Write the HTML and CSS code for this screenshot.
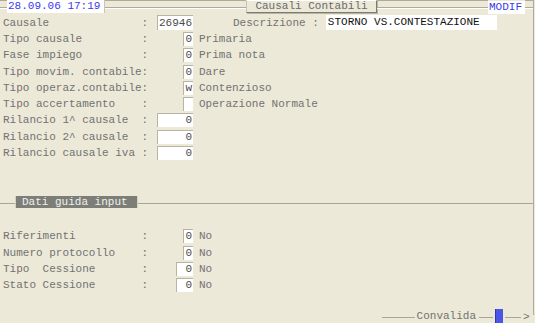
FILE: index.html
```html
<!DOCTYPE html>
<html>
<head>
<meta charset="utf-8">
<link rel="stylesheet" href="styles.css">
</head>
<body>
<div class="screen">
  <div class="topbar">
    <div class="line lead"></div>
    <div class="date">28.09.06 17:19</div>
    <div class="line l1"></div>
    <div class="title">Causali Contabili</div>
    <div class="line l2"></div>
    <div class="modif">MODIF</div>
    <div class="line tail"></div>
  </div>
  <div class="main">
    <div class="row first">
      <span class="lbl">Causale              :</span>
      <span class="fld"><span class="box c5">26946</span></span>
      <span class="desc-lbl">Descrizione :</span>
      <span class="box desc">STORNO VS.CONTESTAZIONE</span>
    </div>
    <div class="row"><span class="lbl">Tipo causale         :</span><span class="fld"><span class="box c1">0</span></span><span class="txt">Primaria</span></div>
    <div class="row"><span class="lbl">Fase impiego         :</span><span class="fld"><span class="box c1">0</span></span><span class="txt">Prima nota</span></div>
    <div class="row"><span class="lbl">Tipo movim. contabile:</span><span class="fld"><span class="box c1">0</span></span><span class="txt">Dare</span></div>
    <div class="row"><span class="lbl">Tipo operaz.contabile:</span><span class="fld"><span class="box c1">w</span></span><span class="txt">Contenzioso</span></div>
    <div class="row"><span class="lbl">Tipo accertamento    :</span><span class="fld"><span class="box c1"></span></span><span class="txt">Operazione Normale</span></div>
    <div class="row"><span class="lbl">Rilancio 1^ causale  :</span><span class="fld"><span class="box c5">0</span></span></div>
    <div class="row"><span class="lbl">Rilancio 2^ causale  :</span><span class="fld"><span class="box c5">0</span></span></div>
    <div class="row"><span class="lbl">Rilancio causale iva :</span><span class="fld"><span class="box c5">0</span></span></div>

    <div class="divider">
      <div class="dline short"></div>
      <div class="dtitle">Dati guida input</div>
      <div class="dline"></div>
    </div>

    <div class="row low first-low"><span class="lbl">Riferimenti          :</span><span class="fld"><span class="box c1">0</span></span><span class="txt">No</span></div>
    <div class="row low"><span class="lbl">Numero protocollo    :</span><span class="fld"><span class="box c1">0</span></span><span class="txt">No</span></div>
    <div class="row low"><span class="lbl">Tipo  Cessione       :</span><span class="fld"><span class="box c2">0</span></span><span class="txt">No</span></div>
    <div class="row low"><span class="lbl">Stato Cessione       :</span><span class="fld"><span class="box c2">0</span></span><span class="txt">No</span></div>
  </div>
  <div class="footer">
    <div class="fline f1"></div>
    <div class="ftext">Convalida</div>
    <div class="fline f2"></div>
    <div class="cursor"></div>
    <div class="fline f3"></div>
    <div class="arrow">&gt;</div>
    <div class="fend"></div>
  </div>
</div>
</body>
</html>
```

FILE: styles.css
```css
* { box-sizing: border-box; }
body {
  margin: 0;
  background: #ECE9D8;
  font-family: "Courier New", "Nimbus Mono PS", "FreeMono", "Liberation Mono", monospace;
  font-size: 11px;
  color: #727272;
}
.screen {
  width: 535px;
  height: 323px;
  overflow: hidden;
}
.topbar {
  display: flex;
  height: 14px;
}
.line {
  background: linear-gradient(to bottom,
    #aeab9b 0, #aeab9b 1px,
    transparent 1px, transparent 7px,
    #aeab9b 7px, #aeab9b 8px,
    #ffffff 8px, #ffffff 9px,
    transparent 9px);
}
.lead { width: 7px; }
.date {
  width: 98px;
  height: 13px;
  background: #fff;
  color: #3a3aee;
  line-height: 13px;
  padding-left: 1px;
  border-right: 1px solid #c9c6b6;
  white-space: pre;
}
.l1 { width: 141px; }
.title {
  width: 131px;
  height: 13px;
  line-height: 11px;
  text-align: center;
  border: 1px solid;
  border-color: #ffffff #7d7b6e #7d7b6e #c8c5b5;
  box-shadow: 1px 1px 0 #b8b5a5;
  color: #6a6a6a;
}
.l2 { flex: 1; }
.modif {
  width: 37px;
  height: 13px;
  margin-top: 1px;
  background: #fff;
  color: #3a3aee;
  line-height: 12px;
  padding-left: 1px;
}
.tail { width: 9px; border-right: 1px solid #aeab9b; margin-right: 1px; }

.main {
  width: 534px;
  height: 295px;
  border-right: 1px solid #aeab9b;
}
.row {
  display: flex;
  align-items: center;
  height: 16.25px;
  padding-left: 3px;
  white-space: pre;
}
.row.first { height: 17px; }
.lbl { width: 145px; }
.fld {
  width: 45px;
  display: flex;
  justify-content: flex-end;
}
.box {
  display: block;
  height: 14px;
  background: #fff;
  border-left: 1px solid #b7b4a4;
  border-top: 1px solid #b7b4a4;
  line-height: 13px;
  text-align: right;
  padding-right: 1px;
  color: #4a4a4a;
}
.c1 { width: 10px; }
.c2 { width: 17px; }
.c5 { width: 36px; }
.row.first .box { height: 15px; line-height: 14px; }
.txt { margin-left: 6px; }
.desc-lbl { margin-left: 40px; }
.box.desc {
  width: 171px;
  margin-left: 7px;
  text-align: left;
  padding-left: 2px;
  color: #111;
  border: none;
}

.divider {
  display: flex;
  height: 12px;
  margin-top: 35px;
}
.dline {
  flex: 1;
  background: linear-gradient(to bottom,
    transparent 0, transparent 7px,
    #a9a693 7px, #a9a693 8px,
    transparent 8px);
}
.dline.short { flex: 0 0 15px; }
.dtitle {
  width: 123px;
  background: #7e7e78;
  color: #f0f0ee;
  line-height: 12px;
  padding-left: 6px;
  border-left: 1px solid #d6d3c4;
  border-right: 1px solid #d6d3c4;
  white-space: pre;
}
.row.first-low { margin-top: 20px; }
.row.low { height: 16.4px; }

.footer {
  display: flex;
  justify-content: flex-end;
  align-items: flex-start;
  width: 534px;
  height: 14px;
}
.fline {
  height: 14px;
  background: linear-gradient(to bottom,
    transparent 0, transparent 8px,
    #a9a693 8px, #a9a693 9px,
    transparent 9px);
}
.f1 { width: 33px; }
.ftext { margin: 0 3px 0 2px; line-height: 14px; }
.f2 { width: 14px; }
.cursor {
  width: 8px;
  height: 14px;
  margin: 0 2px;
  background: #4a56e6;
  border-left: 1px solid #2e38b0;
}
.f3 { width: 16px; }
.arrow { line-height: 16px; margin-left: 2px; width: 7px; }
.fend { width: 4px; height: 6px; border-right: 1px solid #aeab9b; }
```
